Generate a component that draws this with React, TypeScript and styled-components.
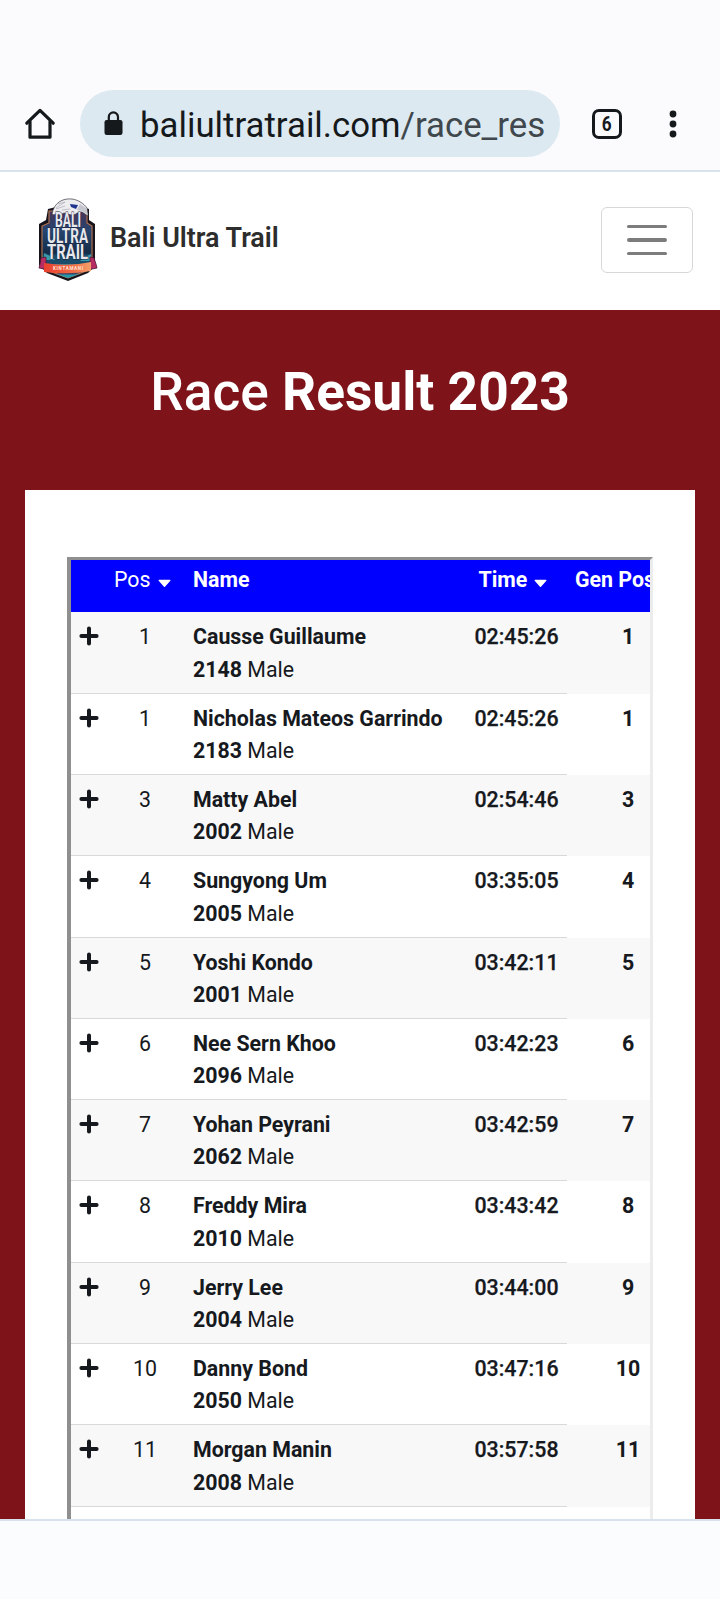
import styled, { createGlobalStyle } from 'styled-components';

const data=
    [
        { pos:1, name:"Causse Guillaume", bib:2148, sex:"Male", time:"02:45:26" },
        { pos:1, name:"Nicholas Mateos Garrindo", bib:2183, sex:"Male", time:"02:45:26" },
        { pos:3, name:"Matty Abel", bib:2002, sex:"Male", time:"02:54:46" },
        { pos:4, name:"Sungyong Um", bib:2005, sex:"Male", time:"03:35:05" },
        { pos:5, name:"Yoshi Kondo", bib:2001, sex:"Male", time:"03:42:11" },
        { pos:6, name:"Nee Sern Khoo", bib:2096, sex:"Male", time:"03:42:23" },
        { pos:7, name:"Yohan Peyrani", bib:2062, sex:"Male", time:"03:42:59" },
        { pos:8, name:"Freddy Mira", bib:2010, sex:"Male", time:"03:43:42" },
        { pos:9, name:"Jerry Lee", bib:2004, sex:"Male", time:"03:44:00" },
        { pos:10, name:"Danny Bond", bib:2050, sex:"Male", time:"03:47:16" },
        { pos:11, name:"Morgan Manin", bib:2008, sex:"Male", time:"03:57:58" },
    ]
;

const GlobalStyle=createGlobalStyle`
    * {
        box-sizing: border-box;
    }
    body {
        margin: 0;
        background: #fbfcfe;
        font-family: Roboto, "Liberation Sans", sans-serif;
        color: #16191d;
    }
    svg {
        display: block;
        flex-shrink: 0;
    }
`;

const Screen=styled.div`
    width: 720px;
    height: 1599px;
    display: flex;
    flex-direction: column;
    overflow: hidden;
`;

const BrowserBar=styled.header`
    height: 172px;
    flex-shrink: 0;
    display: flex;
    align-items: flex-start;
    padding: 90px 0 0 24px;
    border-bottom: 2px solid #d8e2ea;
    background: #fbfbfe;
`;

const BarIcon=styled.div<{ $left?: number }>`
    height: 67px;
    display: flex;
    align-items: center;
    margin-left: ${p => p.$left ?? 0}px;
`;

const UrlPill=styled.div`
    width: 480px;
    height: 67px;
    margin-left: 24px;
    padding-left: 24px;
    border-radius: 34px;
    background: #dde9f1;
    display: flex;
    align-items: center;
`;

const Url=styled.span`
    margin: 3px 0 0 17px;
    font-size: 34.8px;
    line-height: 40px;
    white-space: nowrap;
    color: #15191c;

    span {
        color: #40484d;
    }
`;

const TabCount=styled.div`
    width: 30px;
    height: 30px;
    border: 3px solid #15191c;
    border-radius: 7px;
    display: flex;
    align-items: center;
    justify-content: center;
    font-size: 20px;
    font-weight: 700;
    line-height: 24px;

    span {
        transform: scaleX(0.86);
    }
`;

const Navbar=styled.nav`
    height: 138px;
    flex-shrink: 0;
    display: flex;
    align-items: flex-start;
    padding: 26px 27px 0 38px;
    background: #fff;
`;

const Brand=styled.span`
    margin: 23px auto 0 11px;
    font-size: 26.9px;
    line-height: 34px;
    font-weight: 600;
    color: #2d2d2d;
`;

const Toggler=styled.button`
    width: 92px;
    height: 66px;
    margin-top: 9px;
    padding: 0;
    border: 1px solid #d8d8d8;
    border-radius: 6px;
    background: none;
    display: flex;
    flex-direction: column;
    align-items: center;
    justify-content: center;
    gap: 10px;

    span {
        width: 40px;
        height: 3.4px;
        border-radius: 2px;
        background: #7c7c7c;
    }
`;

const Results=styled.main`
    flex: 1;
    min-height: 0;
    overflow: hidden;
    padding: 0 25px;
    background: #7e141a;
`;

const Title=styled.h1`
    height: 180px;
    margin: 0;
    padding-top: 50px;
    font-size: 53.3px;
    line-height: 64px;
    font-weight: 500;
    text-align: center;
    color: #fff;
`;

const Card=styled.section`
    height: 1100px;
    padding: 67px 42px 0 42px;
    background: #fff;
`;

const Frame=styled.div`
    height: 1100px;
    overflow: hidden;
    border-style: solid;
    border-width: 3px 3px 0 4px;
    border-color: #8f8f90 #ececec #ececec #8f8f90;
`;

const Grid=styled.div`
    display: grid;
    grid-template-columns: 36px 76px 282px 102px 122px;
    font-size: 21.35px;
    line-height: 32.3px;

    b {
        font-weight: 700;
    }
`;

const HeadRow=styled(Grid)`
    height: 52.4px;
    background: #00f;
    color: #fff;
    font-weight: 700;
`;

const HeadCell=styled.div<{ $light?: boolean; $start?: number }>`
    height: 51.5px;
    display: flex;
    align-items: flex-start;
    gap: 7px;
    padding: 4px 0 0 ${p => p.$start ?? 0}px;
    font-weight: ${p => p.$light ? 400 : 700};
    white-space: nowrap;

    svg {
        margin-top: 15px;
    }
`;

const Row=styled(Grid)`
    height: 81.3px;

    &:nth-child(even) {
        background: #f8f8f8;
    }
`;

const Cell=styled.div<{ $line?: boolean; $weight?: number }>`
    height: 81.3px;
    padding-top: 9px;
    text-align: center;
    font-weight: ${p => p.$weight ?? 400};
    border-bottom: ${p => p.$line === false ? 'none' : '1px solid #d8d9da'};
`;

const ExpandCell=styled(Cell)`
    padding: 14px 0 0 7.5px;
`;

const NameCell=styled(Cell)`
    padding-left: 10px;
    text-align: left;
    white-space: nowrap;
`;

const TimeCell=styled(Cell)`
    padding-left: 1px;
    font-weight: 500;
    -webkit-text-stroke: 0.25px #16191d;
`;

const BottomBar=styled.footer`
    height: 80px;
    flex-shrink: 0;
    border-top: 2px solid #d8e2ec;
    background: #fbfcfe;
`;

function HomeIcon() {
    return (
        <svg width="32" height="32" viewBox="0 0 32 32" fill="none" stroke="#15191c" strokeWidth="3.2" strokeLinejoin="round" strokeLinecap="round">
            <path d="M2.8 15.2 16 2.4l13.2 12.8" />
            <path d="M6 13.5v15.7h20V13.5" />
        </svg>
    );
}

function LockIcon() {
    return (
        <svg width="19" height="26" viewBox="0 0 19 26" fill="none">
            <rect x="0.5" y="9" width="18" height="15" rx="2.2" fill="#15191c" />
            <path d="M4.8 10V6a4.6 4.6 0 0 1 9.2 0V10" stroke="#15191c" strokeWidth="2.2" />
        </svg>
    );
}

function MoreIcon() {
    return (
        <svg width="8" height="28" viewBox="0 0 8 28" fill="#15191c">
            <circle cx="4" cy="4" r="3.4" />
            <circle cx="4" cy="14" r="3.4" />
            <circle cx="4" cy="24" r="3.4" />
        </svg>
    );
}

function Caret() {
    return (
        <svg width="13" height="9" viewBox="0 0 13 9">
            <path d="M1.2 1.4h10.6L6.5 7.2Z" fill="#fff" stroke="#fff" strokeWidth="1.4" strokeLinejoin="round" />
        </svg>
    );
}

function PlusIcon() {
    return (
        <svg width="20" height="20" viewBox="0 0 20 20" stroke="#16191d" strokeWidth="4" strokeLinecap="round">
            <path d="M10 2.4v15.2M2.4 10h15.2" />
        </svg>
    );
}

function Logo() {
    return (
        <svg width="61" height="84" viewBox="0 0 61 84">
            <defs>
                <linearGradient id="shield" x1="0" y1="0" x2="0" y2="1">
                    <stop offset="0" stopColor="#4a3358" />
                    <stop offset="0.3" stopColor="#25456f" />
                    <stop offset="0.62" stopColor="#142c48" />
                    <stop offset="0.8" stopColor="#1f8ba0" />
                    <stop offset="1" stopColor="#5a1f45" />
                </linearGradient>
                <linearGradient id="ribbon" x1="0" y1="0" x2="1" y2="0">
                    <stop offset="0" stopColor="#e8402f" />
                    <stop offset="0.6" stopColor="#f26a45" />
                    <stop offset="1" stopColor="#f3a06a" />
                </linearGradient>
            </defs>
            <path d="M10 11 L18 9 H44 L51 11 V22 L57 26 V68 L50 75 L30 83 L9 75 L1 67 V26 L8 22Z" fill="#17131c" />
            <path d="M11 13H49V25L54 28V65L48 73L30 80L11 73L4 64V28L11 25Z" fill="url(#shield)" stroke="#b77753" strokeWidth="1.1" />
            <path d="M5 59l8-3 8 3 9-3 9 4 8-4 7 4v6H5Z" fill="#1b4d6b" />
            <path d="M6 55l6 3 5 4H6zM53 56l-6 3-5 4h11z" fill="#49c5d0" opacity=".65" />
            <path d="M14 16C16 5 24 0 34 1c7 1 12 5 15 9l1 8-6-4-5 1c-4 4-8 1-13 0l-4 2-3-2-3 2-2-1Z" fill="#ededf0" stroke="#3c3842" strokeWidth=".7" />
            <path d="M20 6l7-2-9 6M18 11l9-3M24 12l8-1" fill="none" stroke="#b4b5bf" strokeWidth=".8" />
            <path d="M32 6l8 1-2 4-5-2Z" fill="#20358f" />
            <path d="M42 6l6 4 2 7-6-4-5-1Z" fill="#c5c6ce" />
            <g fill="#e6e8ed" stroke="#1a2442" strokeWidth="1" paintOrder="stroke" fontFamily="Roboto, sans-serif" fontWeight="700" fontSize="19.5">
                <text x="17" y="28.8" textLength="26" lengthAdjust="spacingAndGlyphs">BALI</text>
                <text x="9" y="44.8" textLength="41" lengthAdjust="spacingAndGlyphs">ULTRA</text>
                <text x="9" y="61" fontSize="20" textLength="41" lengthAdjust="spacingAndGlyphs">TRAIL</text>
            </g>
            <path d="M3 60l5-1v9l3 4-10-2 1-4ZM56 60l-4-1v9l-3 4 10-2-1-4Z" fill="#b82c64" stroke="#4b1834" strokeWidth=".8" />
            <path d="M6 65Q30 69 53 64v9Q30 77 6 74Z" fill="url(#ribbon)" />
            <text x="15" y="72" fontSize="4.5" fontWeight="700" fill="#ffe5d8" fontFamily="Roboto, sans-serif" textLength="30">KINTAMANI</text>
            <path d="M18 76q12 1 24 0l-12 4Z" fill="#2299ad" />
        </svg>
    );
}

export default function App() {

    return(
        <Screen>
            <GlobalStyle />
            <BrowserBar>
                <BarIcon><HomeIcon /></BarIcon>
                <UrlPill>
                    <LockIcon />
                    <Url>baliultratrail.com<span>/race_res</span></Url>
                </UrlPill>
                <BarIcon $left={32}>
                    <TabCount><span>6</span></TabCount>
                </BarIcon>
                <BarIcon $left={47}><MoreIcon /></BarIcon>
            </BrowserBar>

            <Navbar>
                <Logo />
                <Brand>Bali Ultra Trail</Brand>
                <Toggler aria-label="Menu">
                    <span />
                    <span />
                    <span />
                </Toggler>
            </Navbar>

            <Results>
                <Title>Race <b>Result 2023</b></Title>
                <Card>
                    <Frame>
                        <HeadRow>
                            <HeadCell />
                            <HeadCell $light $start={7}>Pos <Caret /></HeadCell>
                            <HeadCell $start={10}>Name</HeadCell>
                            <HeadCell $start={13.5}>Time <Caret /></HeadCell>
                            <HeadCell $start={8}>Gen Pos</HeadCell>
                        </HeadRow>

                        {
                            data.map((item)=>(
                                <Row key={item.bib}>
                                    <ExpandCell><PlusIcon /></ExpandCell>
                                    <Cell>{item.pos}</Cell>
                                    <NameCell>
                                        <b>{item.name}</b>
                                        <br />
                                        <b>{item.bib}</b> {item.sex}
                                    </NameCell>
                                    <TimeCell>{item.time}</TimeCell>
                                    <Cell $weight={700} $line={false}>{item.pos}</Cell>
                                </Row>
                            ))
                        }
                    </Frame>
                </Card>
            </Results>

            <BottomBar />
        </Screen>
    )
}
